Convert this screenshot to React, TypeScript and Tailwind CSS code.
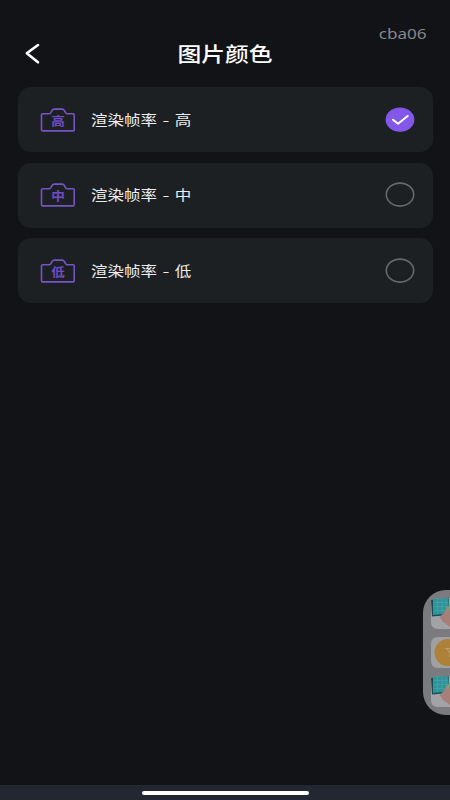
import React from "react";

const levels = [
  { name: "高", checked: true },
  { name: "中", checked: false },
  { name: "低", checked: false },
];

function CameraIcon({ label }: { label: string }) {
  return (
    <svg className="h-[26px] w-[36px] shrink-0" viewBox="0 0 36 26" fill="none">
      <path
        d="M2.7 6.7H9.2Q10.3 6.7 10.9 5.7L12.1 3.4Q12.8 2.1 14.3 2.1H22.1Q23.6 2.1 24.3 3.4L25.5 5.7Q26.1 6.7 27.2 6.7H33Q34.2 6.7 34.2 7.8V22.8Q34.2 23.9 33 23.9H2.7Q1.5 23.9 1.5 22.8V7.8Q1.5 6.7 2.7 6.7Z"
        stroke="#7554c6"
        strokeWidth="1.6"
      />
      <text
        x="0"
        y="0"
        transform="translate(18 18.9) scale(1.13 1)"
        textAnchor="middle"
        fontSize="12"
        fontWeight="700"
        fill="#6d4cc4"
      >
        {label}
      </text>
    </svg>
  );
}

function Radio({ checked }: { checked: boolean }) {
  return (
    <svg className="h-[26px] w-[30px] shrink-0" viewBox="0 0 30 26" fill="none">
      {checked ? (
        <>
          <ellipse cx="15" cy="12.7" rx="14.4" ry="12.2" fill="#8257e9" />
          <path d="M8 12.7L13 16.8L22.7 9" stroke="#fff" strokeWidth="2" strokeLinecap="round" strokeLinejoin="round" />
        </>
      ) : (
        <ellipse cx="15" cy="12.6" rx="13.7" ry="11.5" stroke="#66696c" strokeWidth="1.6" />
      )}
    </svg>
  );
}

function KeyboardTile() {
  return (
    <svg className="h-[32px] w-[19px]" viewBox="0 0 19 32">
      <path d="M7 0H19V31H7Q0 31 0 24V7Q0 0 7 0Z" fill="#a3a2a6" />
      <path d="M0 2L18 0V17L1 18.5Z" fill="#174e54" />
      <path d="M2 .5L17.5 0L18 15.5L2 17Z" fill="#31939a" />
      <path d="M3 4.5H17M3 8.5H17M3 12.5H14M6.5 1V16M11 1V15M15 1V10" stroke="#4fa8a9" strokeWidth="1" opacity=".6" />
      <path d="M19 7L14 12L13 15L8.5 19L12 24L19 29Z" fill="#a68078" />
      <path d="M19 7L15 10L16 13L19 12Z" fill="#819b78" />
    </svg>
  );
}

function CoinTile() {
  return (
    <svg className="h-[32px] w-[19px]" viewBox="0 0 19 32">
      <path d="M7 0H19V31H7Q0 31 0 24V7Q0 0 7 0Z" fill="#a09fa3" />
      <circle cx="17" cy="15.6" r="13.5" fill="#ad8238" />
      <path d="M14 11.5H19M16 12L19 16V20" stroke="#c0a16b" strokeWidth="1.2" fill="none" />
    </svg>
  );
}

export default function App() {
  return (
    <div className="relative flex h-[800px] w-[450px] flex-col overflow-hidden bg-[#121317] font-['Noto_Sans','Noto_Sans_CJK_SC',sans-serif] text-white">
      <header className="relative flex h-[87px] shrink-0 justify-center pt-[38.5px]">
        <svg className="absolute left-[24px] top-[42px] h-[23px] w-[17px]" viewBox="0 0 17 23" fill="none">
          <path d="M14 3L2.8 11.3L14 20.3" stroke="#fff" strokeWidth="2.6" strokeLinecap="round" strokeLinejoin="round" />
        </svg>
        <h1 className="h-[30px] scale-x-[1.19] whitespace-nowrap font-['Noto_Sans_CJK_SC',sans-serif] text-[20px] font-medium leading-[30px]">图片颜色</h1>
        <span className="absolute right-[23px] top-[23px] origin-right scale-x-[1.18] text-[14.5px] leading-[20px] text-[#85868a]">cba06</span>
      </header>

      <main className="flex flex-1 flex-col gap-[10.5px] pl-[18px] pr-[17.5px]">
        {levels.map((level) => (
          <div key={level.name} className="flex h-[65px] shrink-0 items-center rounded-[13px] bg-[#1d2023] pl-[21.5px] pr-[17.5px] font-['Noto_Sans_CJK_SC',sans-serif]">
            <CameraIcon label={level.name} />
            <span className="mb-[2px] ml-[15.5px] flex origin-left scale-x-[1.18] whitespace-pre text-[14px] leading-[22px] text-[#ededef]">
              <span>渲染帧率</span>
              <span className="ml-[4px] mr-[4px] inline-block w-[7px] scale-x-[1.2] text-center">-</span>
              <span>{level.name}</span>
            </span>
            <span className="ml-auto flex">
              <Radio checked={level.checked} />
            </span>
          </div>
        ))}
      </main>

      <aside className="absolute right-0 top-[590px] flex h-[125px] w-[27.5px] flex-col items-end gap-[7px] rounded-l-[23px] bg-[#7b7b7f] pt-[7.5px]">
        <KeyboardTile />
        <CoinTile />
        <KeyboardTile />
      </aside>

      <footer className="flex h-[15px] shrink-0 justify-center bg-[#222731] pt-[5.5px]">
        <div className="h-[4px] w-[167px] rounded-full bg-white" />
      </footer>
    </div>
  );
}
